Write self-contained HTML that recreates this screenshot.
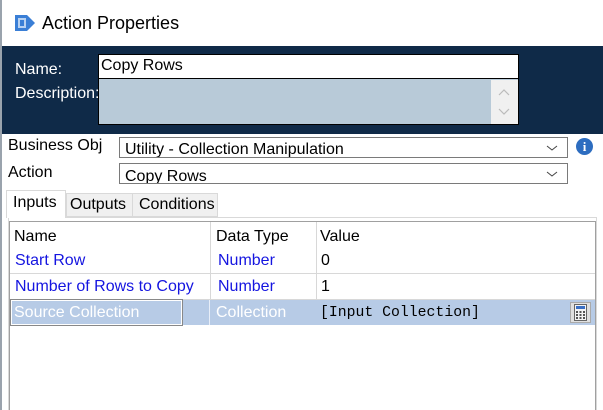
<!DOCTYPE html>
<html><head><style>
*{margin:0;padding:0;box-sizing:border-box}
body{width:603px;height:410px;overflow:hidden;background:#fff;font-family:"Liberation Sans",sans-serif;position:relative;font-size:16px}
.a{position:absolute}
.ml{position:absolute;color:#000;font-size:16px}
</style></head><body>
<div class="a" style="left:0;top:0;width:2px;height:410px;background:#9aa3ad"></div>
<svg class="a" style="left:13px;top:13px" width="24" height="20" viewBox="0 0 24 20"><path d="M2 2h12l8 8-8 8H2z" fill="#3a7fd6"/><rect x="5" y="5" width="8" height="10" fill="#b8d2f2"/><rect x="7" y="7" width="4" height="6" fill="#3a7fd6"/></svg>
<div class="a" style="left:42px;top:13px;font-size:18px">Action Properties</div>
<div class="a" style="left:2px;top:46px;width:601px;height:88px;background:#0f2a48"></div>
<div class="a" style="left:15px;top:61px;color:#fff">Name:</div>
<div class="a" style="left:15px;top:85px;color:#fff">Description:</div>
<div class="a" style="left:98px;top:54px;width:421px;height:25px;background:#fff;border:1px solid #000"></div>
<div class="a" style="left:101px;top:57px">Copy Rows</div>
<div class="a" style="left:98px;top:79px;width:421px;height:46px;background:#b8cad8;border:1px solid #000;border-top:none"></div>
<div class="a" style="left:491px;top:80px;width:27px;height:44px;background:#f0f0f0"></div>
<svg class="a" style="left:491px;top:80px" width="27" height="44"><path d="M8 15l5-5 5 5M8 29l5 5 5-5" fill="none" stroke="#bbb" stroke-width="1.2"/></svg>
<div class="ml" style="left:8px;top:137px">Business Obj</div>
<div class="ml" style="left:8px;top:164px">Action</div>
<div class="a" style="left:119px;top:137px;width:449px;height:21px;border:1px solid #7a7a7a;overflow:hidden"><span style="position:absolute;left:5px;top:3px">Utility - Collection Manipulation</span></div>
<div class="a" style="left:119px;top:163px;width:449px;height:21px;border:1px solid #7a7a7a;overflow:hidden"><span style="position:absolute;left:5px;top:4px">Copy Rows</span></div>
<svg class="a" style="left:545px;top:142px" width="14" height="40"><path d="M2 4l5 4 5-4M2 30l5 4 5-4" fill="none" stroke="#444" stroke-width="1"/></svg>
<div class="a" style="left:576px;top:138px;width:17px;height:17px;border-radius:50%;background:#2d6dc0;color:#fff;font-weight:bold;font-size:13px;text-align:center;line-height:17px;font-family:'Liberation Serif',serif">i</div>
<div class="a" style="left:8px;top:217px;width:589px;height:193px;border:1px solid #d9d9d9;border-bottom:none"></div>
<div class="a" style="left:66px;top:193px;width:67px;height:24px;background:#f0f0f0;border:1px solid #d9d9d9"></div>
<div class="a" style="left:132px;top:193px;width:86px;height:24px;background:#f0f0f0;border:1px solid #d9d9d9"></div>
<div class="a" style="left:6px;top:190px;width:60px;height:28px;background:#fff;border:1px solid #d9d9d9;border-bottom:none"></div>
<div class="ml" style="left:13px;top:194px">Inputs</div>
<div class="ml" style="left:70px;top:196px">Outputs</div>
<div class="ml" style="left:139px;top:196px">Conditions</div>
<div class="a" style="left:9px;top:221px;width:587px;height:189px;border:1px solid #a0a0a0;border-bottom:none"></div>
<div class="a" style="left:210px;top:222px;width:1px;height:103px;background:#d8d8d8"></div>
<div class="a" style="left:316px;top:222px;width:1px;height:103px;background:#d8d8d8"></div>
<div class="a" style="left:10px;top:273px;width:585px;height:1px;background:#d8d8d8"></div>
<div class="a" style="left:10px;top:299px;width:585px;height:1px;background:#d8d8d8"></div>
<div class="a" style="left:10px;top:300px;width:585px;height:25px;background:#b7cbe6"></div>
<div class="a" style="left:11px;top:300px;width:171px;height:25px;border:1px solid #fff;outline:1px solid #888"></div>
<div class="a" style="left:209px;top:300px;width:1px;height:25px;background:#e8eef8"></div>
<div class="ml" style="left:14px;top:228px">Name</div>
<div class="ml" style="left:216px;top:228px">Data Type</div>
<div class="ml" style="left:320px;top:228px">Value</div>
<div class="ml" style="left:15px;top:252px;color:#1515e0">Start Row</div>
<div class="ml" style="left:218px;top:252px;color:#1515e0">Number</div>
<div class="ml" style="left:321px;top:252px">0</div>
<div class="ml" style="left:15px;top:278px;color:#1515e0">Number of Rows to Copy</div>
<div class="ml" style="left:218px;top:278px;color:#1515e0">Number</div>
<div class="ml" style="left:321px;top:278px">1</div>
<div class="ml" style="left:14px;top:304px;color:#fff">Source Collection</div>
<div class="ml" style="left:216px;top:304px;color:#fff">Collection</div>
<div class="ml" style="left:320px;top:305px;font-family:'Liberation Mono',monospace;font-size:14.8px">[Input Collection]</div>
<div class="a" style="left:570px;top:302px;width:21px;height:21px;background:#e0e0e0;border:1px solid #aaa"></div>
<svg class="a" style="left:574px;top:304px" width="13" height="17" viewBox="0 0 13 17"><rect x="0.5" y="0.5" width="12" height="16" fill="#f4f4f4" stroke="#666"/><rect x="2" y="2" width="9" height="3" fill="#3a6fc4"/><g fill="#555"><rect x="2" y="7" width="2" height="2"/><rect x="5.5" y="7" width="2" height="2"/><rect x="9" y="7" width="2" height="2"/><rect x="2" y="10" width="2" height="2"/><rect x="5.5" y="10" width="2" height="2"/><rect x="9" y="10" width="2" height="2"/><rect x="2" y="13" width="2" height="2"/><rect x="5.5" y="13" width="2" height="2"/><rect x="9" y="13" width="2" height="2"/></g></svg>
</body></html>
